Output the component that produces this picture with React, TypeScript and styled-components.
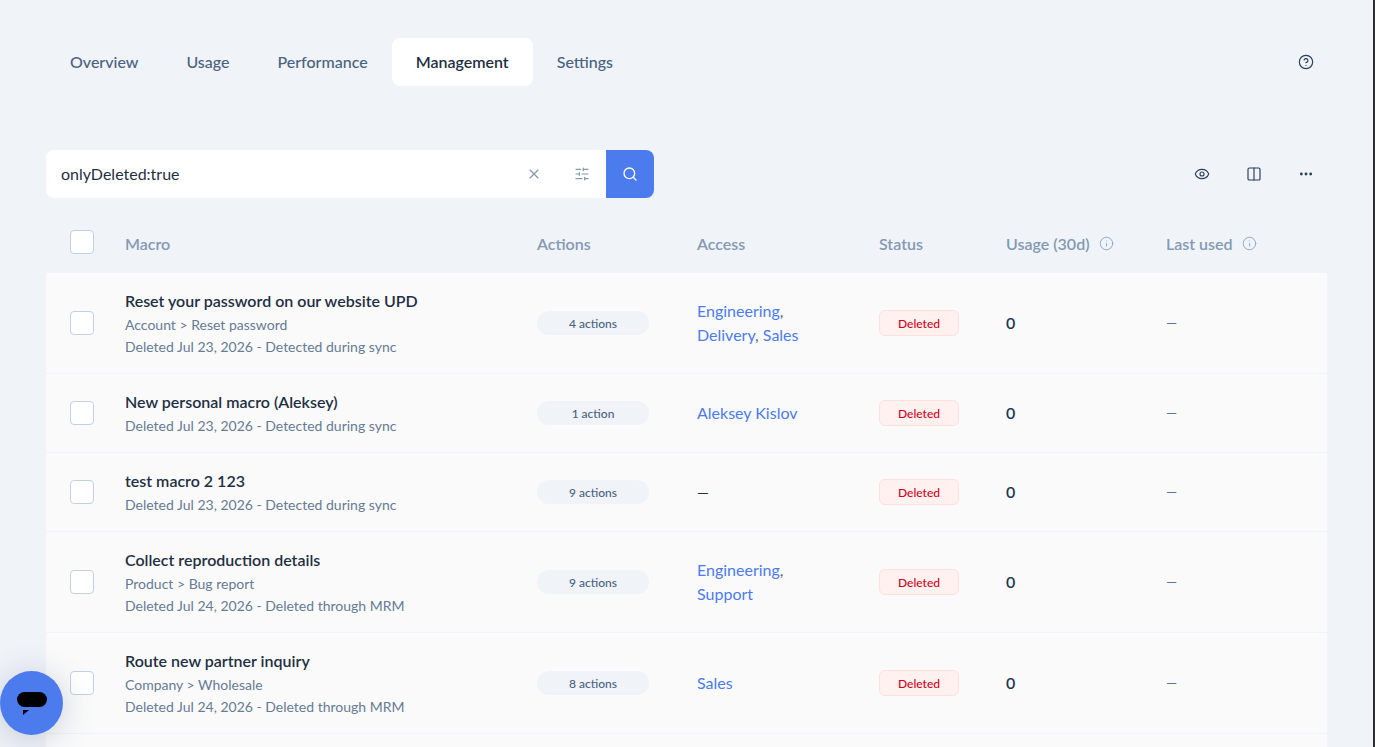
import React from "react";
import styled, { createGlobalStyle } from "styled-components";
import { X, SlidersHorizontal, Search, Eye, Columns2, Ellipsis, CircleHelp, Info } from "lucide-react";

const Global = createGlobalStyle`
  html, body { margin: 0; padding: 0; height: 100%; overflow: hidden; }
  body { background: #f0f3f8; font-family: Lato, "Open Sans", sans-serif; color: #1f2f43; }
  #root { height: 100%; }
`;

const Page = styled.div`
  width: 1375px;
  height: 747px;
  overflow: hidden;
  box-sizing: border-box;
  padding: 38px 43px 0 46px;
  position: relative;
`;

const TabBar = styled.nav`
  display: flex;
  align-items: center;
  height: 48px;
`;

const Tab = styled.div<{ $active?: boolean }>`
  height: 48px;
  box-sizing: border-box;
  padding: 0 24px 2px;
  display: flex;
  align-items: center;
  border-radius: 8px;
  font-size: 16px;
  font-weight: ${(p) => (p.$active ? 600 : 500)};
  color: ${(p) => (p.$active ? "#1f2f43" : "#4a6280")};
  background: ${(p) => (p.$active ? "#ffffff" : "transparent")};
`;

const HelpSlot = styled.div`
  margin-left: auto;
  margin-right: 18px;
  display: flex;
  color: #2a3f5c;
`;

const Toolbar = styled.div`
  display: flex;
  align-items: center;
  margin-top: 64px;
  height: 48px;
`;

const SearchBox = styled.div`
  width: 608px;
  height: 48px;
  display: flex;
  align-items: center;
  background: #ffffff;
  border-radius: 8px;
  overflow: hidden;
`;

const SearchText = styled.div`
  flex: 1;
  padding: 0 0 2px 15px;
  font-size: 16px;
  color: #1f2f43;
`;

const FieldIcon = styled.div`
  width: 48px;
  display: flex;
  justify-content: center;
  color: #8498ad;
`;

const SearchButton = styled.div`
  width: 48px;
  height: 48px;
  display: flex;
  align-items: center;
  justify-content: center;
  background: #4c7bee;
  color: #ffffff;
`;

const ToolIcons = styled.div`
  margin-left: auto;
  display: flex;
  align-items: center;
  color: #2a3f5c;
`;

const ToolIcon = styled.div`
  width: 52px;
  display: flex;
  justify-content: center;
`;

const cols = "79px 412px 160px 182px 127px 160px 1fr";

const HeadRow = styled.div`
  display: grid;
  grid-template-columns: ${cols};
  align-items: center;
  height: 75px;
  width: 1281px;
  padding-top: 13px;
  box-sizing: border-box;
`;

const HeadCell = styled.div`
  display: flex;
  align-items: center;
  gap: 9px;
  padding-top: 2px;
  font-size: 16px;
  font-weight: 600;
  color: #8499b3;
`;

const InfoSlot = styled.span`
  display: flex;
  color: #8ba6c4;
`;

const CheckCell = styled.div`
  padding-left: 24px;
  display: flex;
`;

const Check = styled.div`
  width: 24px;
  height: 24px;
  box-sizing: border-box;
  background: #ffffff;
  border: 1px solid #c2d0e0;
  border-radius: 4px;
`;

const Row = styled.div<{ $height: number }>`
  display: grid;
  grid-template-columns: ${cols};
  align-items: center;
  width: 1281px;
  height: ${(p) => p.$height}px;
  box-sizing: border-box;
  background: #fafafa;
  border-bottom: 1px solid #f0f3f8;
`;

const MacroCell = styled.div`
  display: flex;
  flex-direction: column;
  padding-top: 1px;
`;

const Title = styled.div`
  font-size: 16px;
  font-weight: 600;
  line-height: 24px;
  margin-bottom: 1px;
  color: #1f2f43;
`;

const Sub = styled.div`
  font-size: 14px;
  line-height: 22px;
  color: #667b94;
`;

const Pill = styled.div`
  width: 112px;
  height: 24px;
  display: flex;
  align-items: center;
  justify-content: center;
  border-radius: 12px;
  background: #f0f3f8;
  font-size: 12px;
  font-weight: 500;
  color: #4a6280;
`;

const Access = styled.div`
  font-size: 16px;
  line-height: 24px;
  color: #4c7bee;
  max-width: 120px;
`;

const Comma = styled.span`
  color: #4a6280;
`;

const DashDark = styled.div`
  font-size: 15px;
  color: #1f2f43;
`;

const Badge = styled.div`
  width: 80px;
  height: 26px;
  box-sizing: border-box;
  display: flex;
  align-items: center;
  justify-content: center;
  background: #fff1f0;
  border: 1px solid #ffe0de;
  border-radius: 6px;
  font-size: 12px;
  font-weight: 500;
  color: #d0021b;
`;

const Count = styled.div`
  font-size: 16px;
  font-weight: 600;
  padding-bottom: 2px;
  color: #1f3550;
`;

const Dash = styled.div`
  font-size: 14px;
  padding-bottom: 2px;
  color: #62778f;
`;

const EdgeLine = styled.div`
  position: absolute;
  top: 0;
  right: 0;
  width: 2px;
  height: 100%;
  background: #2a2b30;
`;

const Chat = styled.div`
  position: absolute;
  left: 0;
  top: 671px;
  width: 63px;
  height: 64px;
  border-radius: 50%;
  background: #4c7bee;
  box-shadow: 0 4px 32px rgba(60, 85, 120, 0.26);
  display: flex;
  align-items: center;
  justify-content: center;
`;

type Data = {
  title: string;
  path?: string;
  deleted: string;
  actions: string;
  access: string[] | null;
  h: number;
};

const rows: Data[] = [
  { title: "Reset your password on our website UPD", path: "Account > Reset password", deleted: "Deleted Jul 23, 2026 - Detected during sync", actions: "4 actions", access: ["Engineering", "Delivery", "Sales"], h: 101 },
  { title: "New personal macro (Aleksey)", deleted: "Deleted Jul 23, 2026 - Detected during sync", actions: "1 action", access: ["Aleksey Kislov"], h: 79 },
  { title: "test macro 2 123", deleted: "Deleted Jul 23, 2026 - Detected during sync", actions: "9 actions", access: null, h: 79 },
  { title: "Collect reproduction details", path: "Product > Bug report", deleted: "Deleted Jul 24, 2026 - Deleted through MRM", actions: "9 actions", access: ["Engineering", "Support"], h: 101 },
  { title: "Route new partner inquiry", path: "Company > Wholesale", deleted: "Deleted Jul 24, 2026 - Deleted through MRM", actions: "8 actions", access: ["Sales"], h: 101 },
];

export default function App() {
  return (
    <Page>
      <Global />
      <TabBar>
        <Tab>Overview</Tab>
        <Tab>Usage</Tab>
        <Tab>Performance</Tab>
        <Tab $active>Management</Tab>
        <Tab>Settings</Tab>
        <HelpSlot><CircleHelp size={16} strokeWidth={1.75} /></HelpSlot>
      </TabBar>
      <Toolbar>
        <SearchBox>
          <SearchText>onlyDeleted:true</SearchText>
          <FieldIcon><X size={16} strokeWidth={1.75} /></FieldIcon>
          <FieldIcon><SlidersHorizontal size={16} strokeWidth={1.75} /></FieldIcon>
          <SearchButton><Search size={16} strokeWidth={2} /></SearchButton>
        </SearchBox>
        <ToolIcons>
          <ToolIcon><Eye size={16} strokeWidth={1.75} /></ToolIcon>
          <ToolIcon><Columns2 size={16} strokeWidth={1.75} /></ToolIcon>
          <ToolIcon><Ellipsis size={16} strokeWidth={2.25} /></ToolIcon>
        </ToolIcons>
      </Toolbar>
      <HeadRow>
        <CheckCell><Check /></CheckCell>
        <HeadCell>Macro</HeadCell>
        <HeadCell>Actions</HeadCell>
        <HeadCell>Access</HeadCell>
        <HeadCell>Status</HeadCell>
        <HeadCell>Usage (30d)<InfoSlot><Info size={15} strokeWidth={1.5} /></InfoSlot></HeadCell>
        <HeadCell>Last used<InfoSlot><Info size={15} strokeWidth={1.5} /></InfoSlot></HeadCell>
      </HeadRow>
      {rows.map((r) => (
        <Row key={r.title} $height={r.h}>
          <CheckCell><Check /></CheckCell>
          <MacroCell>
            <Title>{r.title}</Title>
            {r.path && <Sub>{r.path}</Sub>}
            <Sub>{r.deleted}</Sub>
          </MacroCell>
          <div><Pill>{r.actions}</Pill></div>
          {r.access ? (
            <Access>
              {r.access.map((a, i) => (
                <React.Fragment key={a}>
                  {a}
                  {i < r.access!.length - 1 && <Comma>, </Comma>}
                </React.Fragment>
              ))}
            </Access>
          ) : (
            <DashDark>—</DashDark>
          )}
          <div><Badge>Deleted</Badge></div>
          <Count>0</Count>
          <Dash>—</Dash>
        </Row>
      ))}
      <Row $height={101} />
      <EdgeLine />
      <Chat>
        <svg width="32" height="26" viewBox="0 0 32 26">
          <rect x="1" y="2" width="30" height="15" rx="7.5" fill="#000" />
          <path d="M7 20h6l-6 5z" fill="#000" />
        </svg>
      </Chat>
    </Page>
  );
}
